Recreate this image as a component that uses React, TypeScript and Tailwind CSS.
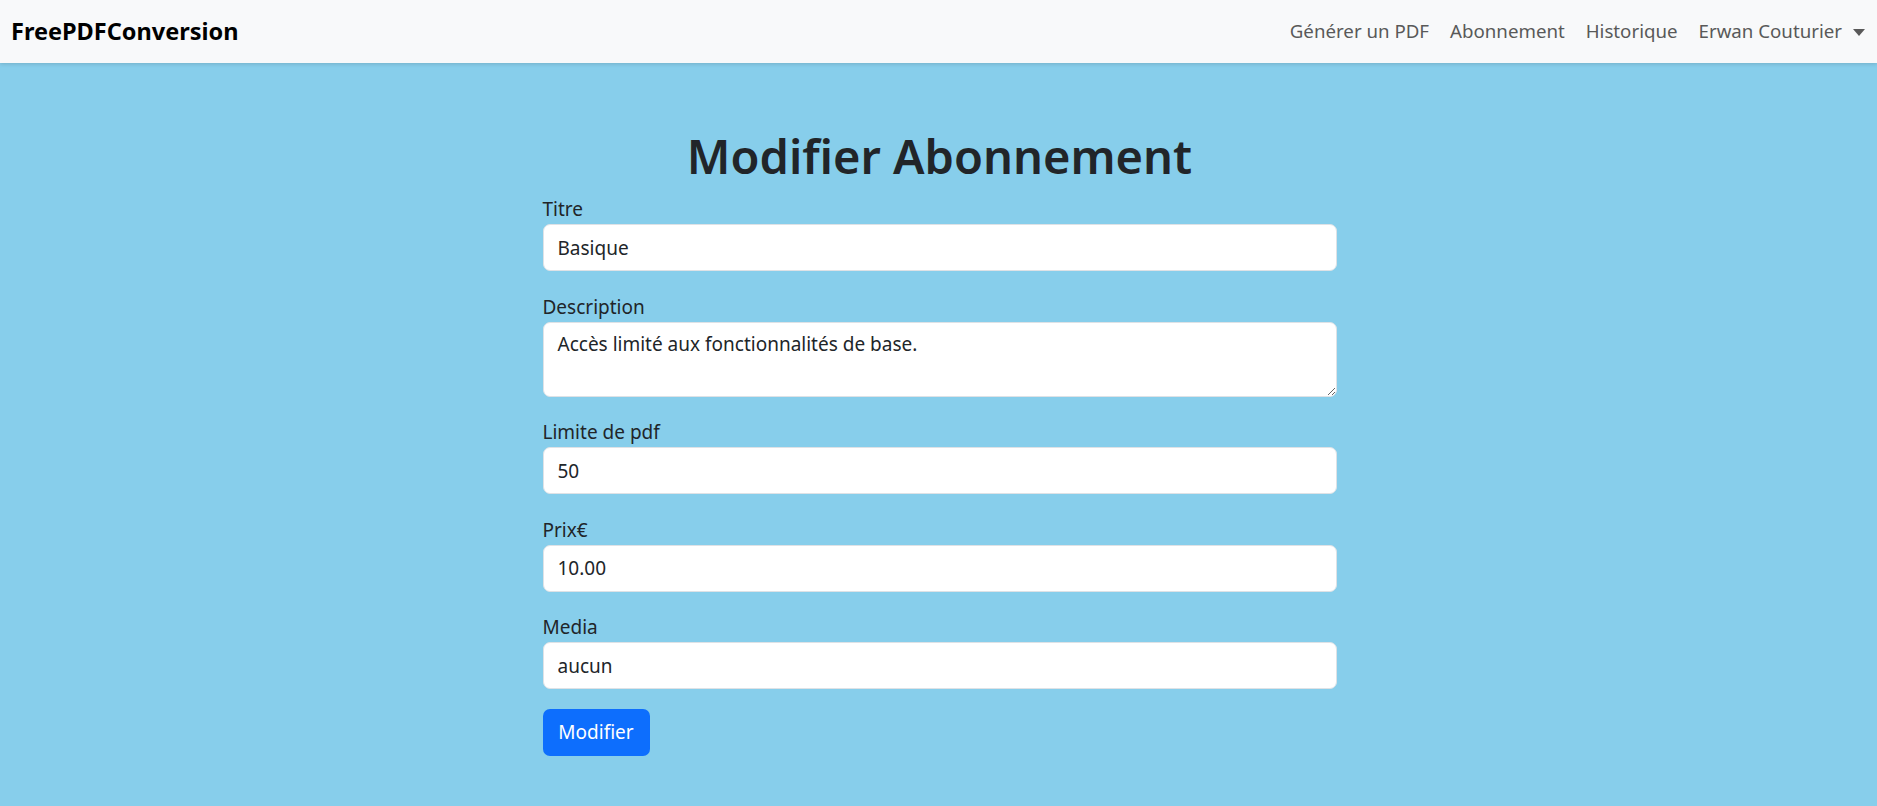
import React from "react";

const font = { fontFamily: '"Noto Sans", "Open Sans", sans-serif' };

function Field({
  label,
  value,
  area,
}: {
  label: string;
  value: string;
  area?: boolean;
}) {
  return (
    <div className="mb-[21.5px]">
      <label className="block text-[19px] leading-[29px] text-[#212529]">{label}</label>
      {area ? (
        <textarea
          defaultValue={value}
          className="block h-[75px] w-full rounded-[7px] border border-[#dee2e6] bg-white px-[14px] py-[7px] text-[19px] leading-[29px] text-[#212529] outline-none"
        />
      ) : (
        <input
          defaultValue={value}
          className="block h-[47px] w-full rounded-[7px] border border-[#dee2e6] bg-white px-[14px] text-[19px] text-[#212529] outline-none"
        />
      )}
    </div>
  );
}

export default function App() {
  return (
    <div style={font} className="min-h-[806px] bg-[#87ceeb]">
      <nav className="flex h-[63px] items-center justify-between bg-[#f8f9fa] pl-[11px] pr-[12px] shadow-[0_1px_4px_rgba(0,0,0,0.15)]">
        <a className="text-[23.5px] font-bold text-black">FreePDFConversion</a>
        <ul className="flex items-center gap-[21px] text-[18.7px] text-[#595959]">
          <li>Générer un PDF</li>
          <li>Abonnement</li>
          <li>Historique</li>
          <li className="flex items-center gap-[11px]">
            Erwan Couturier
            <span className="mt-[2px] h-0 w-0 border-x-[6px] border-t-[7px] border-x-transparent border-t-[#595959]" />
          </li>
        </ul>
      </nav>

      <div className="mx-auto w-[794px] translate-x-[1px] pt-[63px]">
        <h1 className="mb-[9px] text-center text-[47px] font-semibold leading-[60px] text-[#212529]">
          Modifier Abonnement
        </h1>
        <form>
          <Field label="Titre" value="Basique" />
          <Field label="Description" value="Accès limité aux fonctionnalités de base." area />
          <Field label="Limite de pdf" value="50" />
          <Field label="Prix€" value="10.00" />
          <Field label="Media" value="aucun" />
          <button
            type="button"
            className="-mt-[2px] h-[47px] w-[107px] rounded-[7px] bg-[#0d6efd] text-[19px] text-white"
          >
            Modifier
          </button>
        </form>
      </div>
    </div>
  );
}
